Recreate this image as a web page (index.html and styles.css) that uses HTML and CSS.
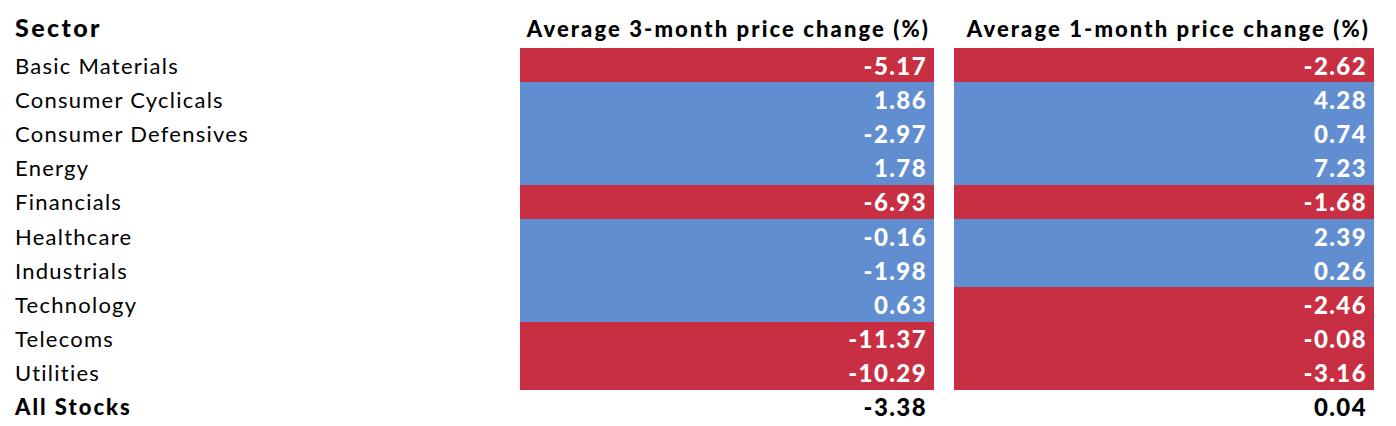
FILE: index.html
```html
<!DOCTYPE html>
<html>
<head>
<meta charset="utf-8">
<link rel="stylesheet" href="styles.css">
</head>
<body>
<div class="grid">
  <div class="hd sector">Sector</div>
  <div class="hd num-hd">Average 3-month price change (%)</div>
  <div class="hd num-hd">Average 1-month price change (%)</div>

  <div class="name">Basic Materials</div>
  <div class="val neg">-5.17</div>
  <div class="val neg">-2.62</div>

  <div class="name">Consumer Cyclicals</div>
  <div class="val pos">1.86</div>
  <div class="val pos">4.28</div>

  <div class="name">Consumer Defensives</div>
  <div class="val pos">-2.97</div>
  <div class="val pos">0.74</div>

  <div class="name">Energy</div>
  <div class="val pos">1.78</div>
  <div class="val pos">7.23</div>

  <div class="name">Financials</div>
  <div class="val neg">-6.93</div>
  <div class="val neg">-1.68</div>

  <div class="name">Healthcare</div>
  <div class="val pos">-0.16</div>
  <div class="val pos">2.39</div>

  <div class="name">Industrials</div>
  <div class="val pos">-1.98</div>
  <div class="val pos">0.26</div>

  <div class="name">Technology</div>
  <div class="val pos">0.63</div>
  <div class="val neg">-2.46</div>

  <div class="name">Telecoms</div>
  <div class="val neg">-11.37</div>
  <div class="val neg">-0.08</div>

  <div class="name">Utilities</div>
  <div class="val neg">-10.29</div>
  <div class="val neg">-3.16</div>

  <div class="name total">All Stocks</div>
  <div class="val total">-3.38</div>
  <div class="val total">0.04</div>
</div>
</body>
</html>
```
FILE: styles.css
```css
html, body {
  margin: 0;
  padding: 0;
  background: #ffffff;
}
body {
  font-family: "Lato", "Noto Sans", sans-serif;
  color: #000;
}
.grid {
  display: grid;
  grid-template-columns: 485px 414px 420px;
  grid-template-rows: 48px repeat(11, 34.2px);
  column-gap: 20px;
  padding-left: 15px;
}
.hd {
  font-weight: 900;
  display: flex;
  align-items: flex-end;
  padding-bottom: 6px;
  box-sizing: border-box;
}
.sector {
  font-size: 25px;
  letter-spacing: 2.4px;
}
.num-hd {
  font-size: 22px;
  letter-spacing: 2.1px;
  justify-content: flex-end;
  padding-right: 4px;
}
.name {
  font-size: 22px;
  letter-spacing: 1.25px;
  display: flex;
  align-items: center;
}
.val {
  font-size: 24px;
  font-weight: 900;
  display: flex;
  align-items: center;
  justify-content: flex-end;
  padding-right: 7px;
  color: #fff;
  letter-spacing: 1.4px;
}
.neg { background: #c82f42; }
.pos { background: #618dd1; }
.total {
  font-weight: 900;
  color: #000;
}
.name.total { letter-spacing: 2px; }
```
